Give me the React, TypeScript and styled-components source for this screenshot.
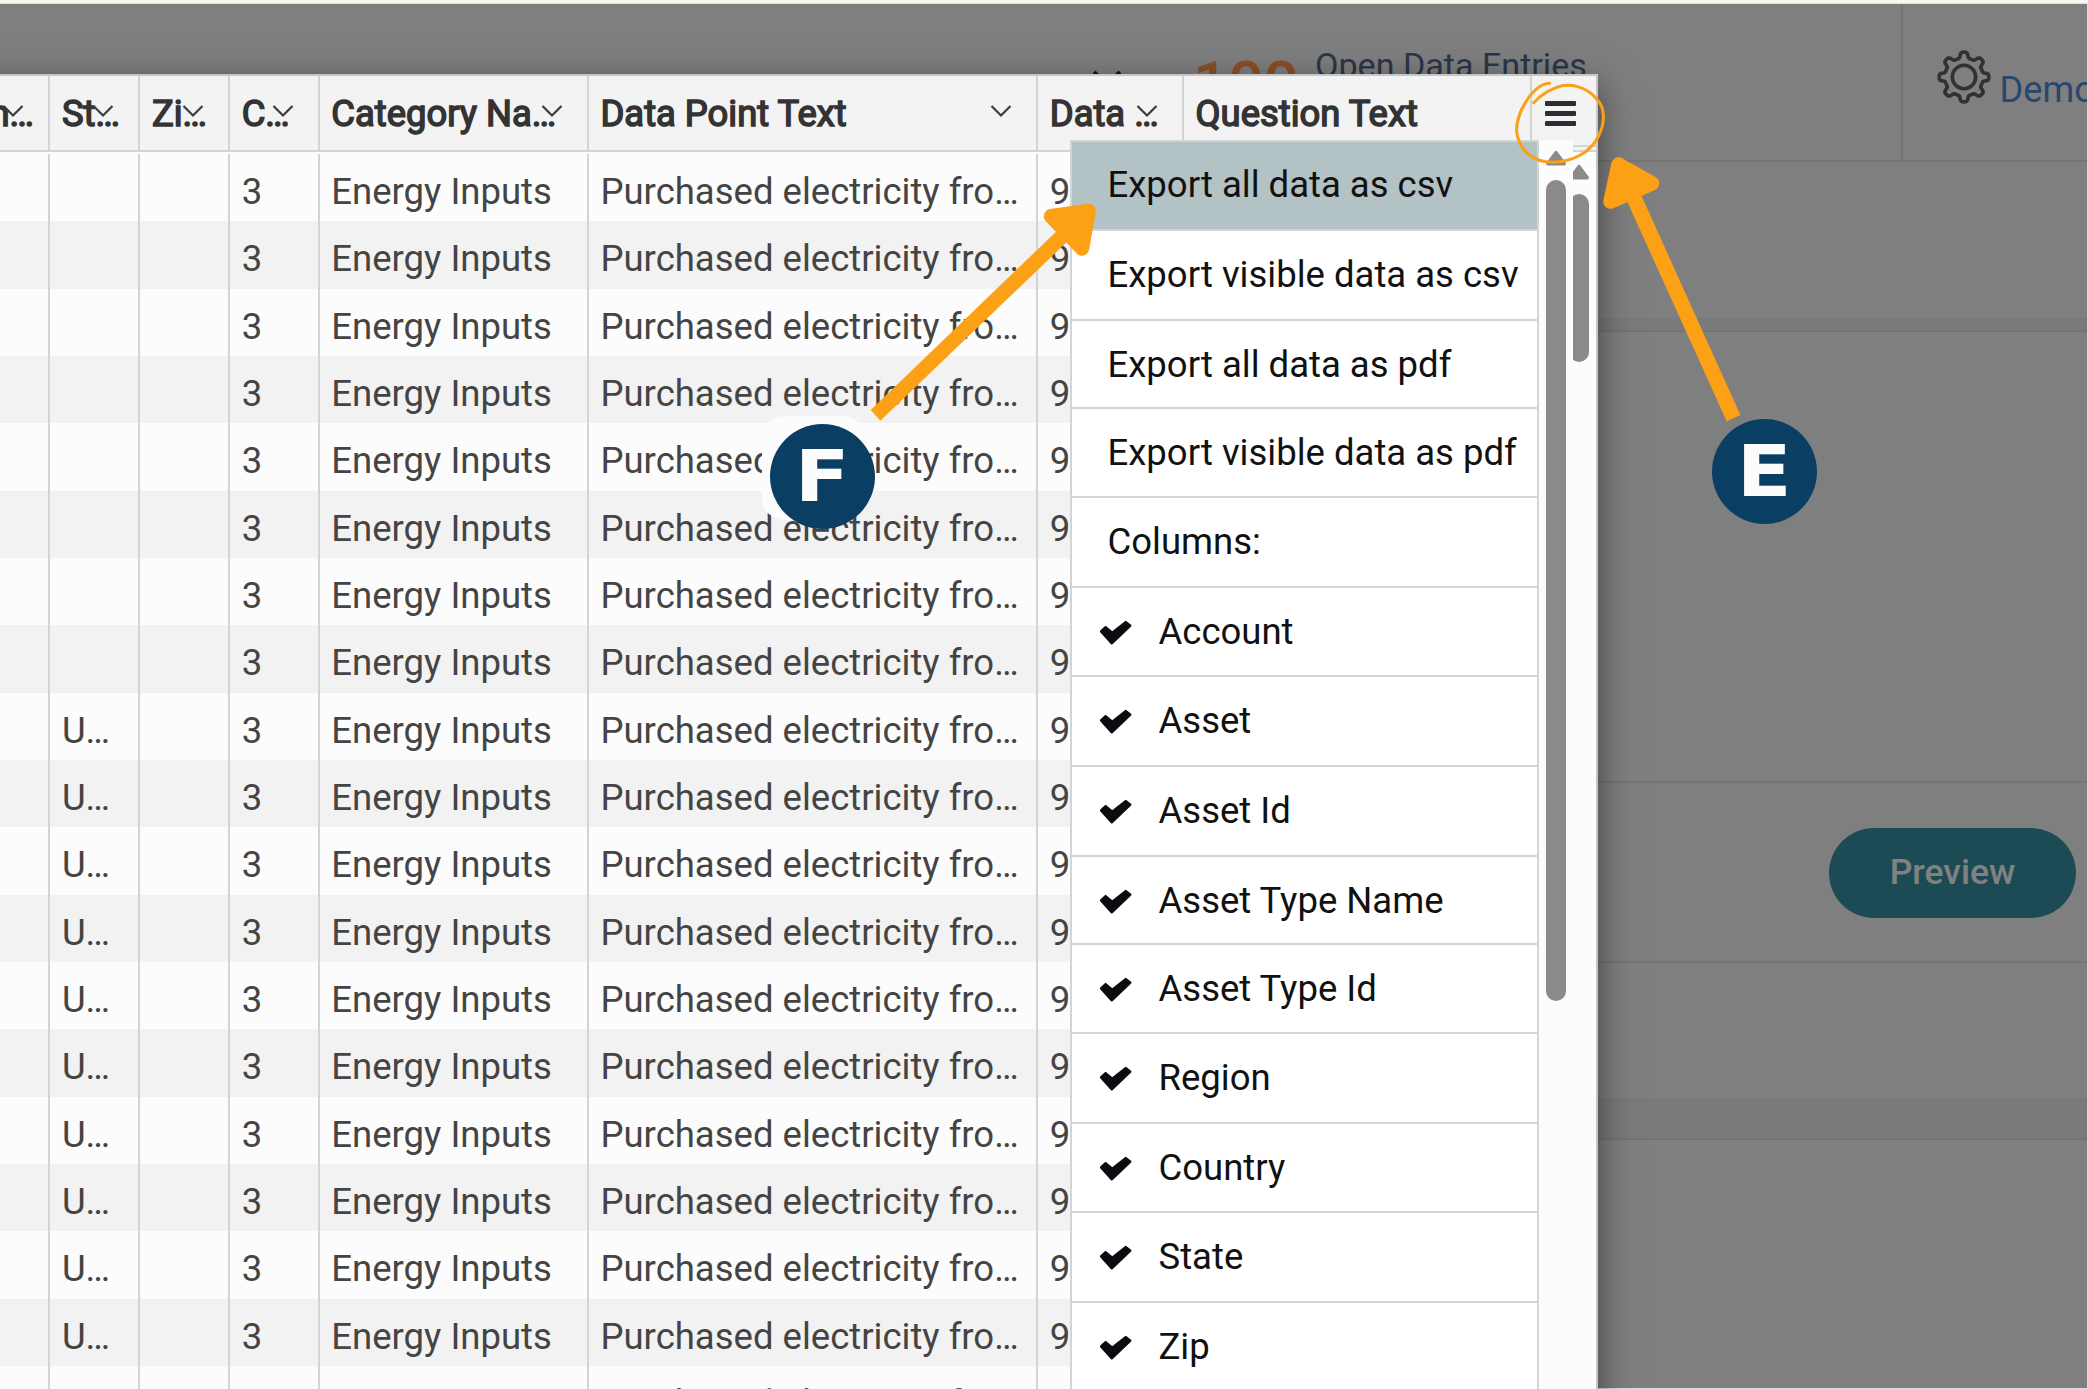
import React from "react";
import styled, { createGlobalStyle } from "styled-components";

const SANS = `Roboto, "Liberation Sans", sans-serif`;
const LINE = "#d4d4d4";
const ORANGE = "#fca016";
const NAVY = "#0b3e63";

const GlobalStyle = createGlobalStyle`
  * { box-sizing: border-box; }
  html, body { margin: 0; padding: 0; }
  body { background: #e6e7e0; font-family: ${SANS}; overflow: hidden; }
`;

const Stage = styled.div`
  position: relative;
  width: 2088px;
  height: 1389px;
  padding: 4px 1px 1px 0;
  overflow: hidden;
  background: linear-gradient(#f8faee 0 3px, #dcdcd8 3px);
`;

const Backdrop = styled.div`
  display: flex;
  flex-direction: column;
  width: 2087px;
  height: 1384px;
  background: #7f7f7f;
  overflow: hidden;
`;

const TopBar = styled.header`
  display: flex;
  flex: none;
  height: 158px;
  border-bottom: 2px solid #747474;
`;

const Summary = styled.div`
  display: flex;
  align-items: flex-start;
  flex: none;
  width: 1903px;
  padding-left: 1092px;
  border-right: 2px solid #747474;
`;

const SummaryChevron = styled.svg`
  width: 30px;
  height: 20px;
  margin-top: 62px;
`;

const Count = styled.span`
  width: 116px;
  margin: 44px 0 0 71px;
  font-size: 62px;
  font-weight: 500;
  line-height: 72px;
  color: #8a5129;
`;

const SummaryLink = styled.span`
  margin: 41px 0 0 6px;
  font-size: 34.1px;
  line-height: 40px;
  white-space: nowrap;
  color: #2c3648;
`;

const Account = styled.div`
  display: flex;
  align-items: flex-start;
  flex: 1;
  padding-left: 32.5px;
  overflow: hidden;
`;

const Gear = styled.svg`
  flex: none;
  width: 56px;
  height: 56px;
  margin-top: 44.5px;
`;

const AccountName = styled.span`
  margin: 65px 0 0 8px;
  font-size: 36.2px;
  line-height: 42px;
  white-space: nowrap;
  color: #27486c;
`;

const Section = styled.section<{ $height: number }>`
  display: flex;
  align-items: center;
  justify-content: flex-end;
  flex: none;
  height: ${(p) => p.$height}px;
  padding: 2px 11px 0 0;
  border-bottom: 2px solid #747474;
`;

const Band = styled.div<{ $height: number }>`
  flex: none;
  height: ${(p) => p.$height}px;
  background: #797a7c;
  border-bottom: 2px solid #747474;
`;

const Gap = styled.div<{ $height: number }>`
  flex: none;
  height: ${(p) => p.$height}px;
`;

const PreviewButton = styled.button`
  width: 247px;
  height: 90px;
  padding: 0 0 3px;
  border: 0;
  border-radius: 45px;
  background: #1d4b55;
  color: #808282;
  font: 500 35.5px ${SANS};
`;

const Modal = styled.div`
  position: absolute;
  top: 74px;
  left: -42px;
  width: 1640px;
  height: 1340px;
  border: 2px solid #c6c6c6;
  background: #fcfcfc;
  box-shadow: 0 11px 34px rgba(0, 0, 0, 0.5);
  overflow: hidden;
`;

const COLUMNS = "90.4px 90px 89.8px 89.6px 269.2px 449.3px 145.8px 348.2px 1fr";

const HeaderRow = styled.div`
  display: grid;
  grid-template-columns: ${COLUMNS};
  height: 76px;
  background: #f3f3f3;
  border-bottom: 2px solid ${LINE};
`;

const HeaderCell = styled.div`
  display: flex;
  align-items: flex-start;
  position: relative;
  padding: 15px 0 0 11.5px;
  border-right: 2px solid ${LINE};
  overflow: hidden;
  white-space: nowrap;
  font-size: 36.4px;
  line-height: 46px;
  color: #333;
  -webkit-text-stroke: 1.5px #333;
`;

const MenuCell = styled.div`
  padding: 25px 0 0 13px;
  background: linear-gradient(#f3f3f3 0 69px, ${LINE} 69px 71px, #f3f3f3 71px);
`;

const FirstLabel = styled.span`
  margin-left: 18px;
`;

const HeaderChevron = styled.svg`
  position: absolute;
  right: 24px;
  top: 28px;
  width: 22px;
  height: 14px;
`;

const Hamburger = styled.span`
  display: grid;
  gap: 5.5px;
  width: 31px;

  i {
    height: 4.7px;
    border-radius: 1px;
    background: #2c2c33;
  }
`;

const Body = styled.div`
  width: 1572px;
  padding-top: 2px;
`;

const Row = styled.div`
  display: grid;
  grid-template-columns: ${COLUMNS};
  height: 67.34px;

  &:nth-child(even) {
    background: #f2f2f2;
  }
`;

const Cell = styled.div<{ $bare?: boolean }>`
  padding: 4px 0 0 11.5px;
  border-right: ${(p) => (p.$bare ? "0" : `2px solid ${LINE}`)};
  overflow: hidden;
  white-space: nowrap;
  font-size: 36.5px;
  line-height: 67px;
  color: #444;
`;

const Bar = styled.div<{ $left: number; $top: number }>`
  position: absolute;
  left: ${(p) => p.$left}px;
  top: ${(p) => p.$top}px;
  display: flex;
  flex-direction: column;
  align-items: center;
  gap: 14px;
  width: 20px;
`;

const BarArrow = styled.svg`
  width: 20px;
  height: 16px;
`;

const Thumb = styled.div<{ $length: number }>`
  width: 20px;
  height: ${(p) => p.$length}px;
  border-radius: 10px;
  background: #8a8a8a;
`;

const Dropdown = styled.div`
  position: absolute;
  left: 1070px;
  top: 140px;
  display: flex;
  width: 503px;
  height: 1249px;
  background: #fcfcfc;
`;

const MenuList = styled.ul`
  width: 469px;
  height: 1300px;
  margin: 0;
  padding: 0;
  list-style: none;
  background: #fff;
  border: 2px solid ${LINE};
`;

const MenuItem = styled.li<{ $active?: boolean; $tight?: boolean }>`
  display: flex;
  align-items: flex-start;
  height: ${(p) => (p.$tight ? 88 : p.$active ? 89 : 89.6)}px;
  padding-left: 35.5px;
  border-bottom: 2px solid ${LINE};
  background: ${(p) => (p.$active ? "#b3c2c5" : "#fff")};
  font-size: 36.5px;
  line-height: ${(p) => (p.$active ? 86 : 88)}px;
  white-space: nowrap;
  color: #111;
`;

const Tick = styled.svg`
  width: 34px;
  height: 26px;
  margin: 32px 26px 0 -9px;
`;

const Annotations = styled.svg`
  position: absolute;
  inset: 0;
  width: 2088px;
  height: 1389px;
`;

const Halo = styled.div`
  position: absolute;
  left: 762px;
  top: 416px;
  width: 103px;
  height: 104px;
  border-radius: 22px;
  background: #fcfcfc;
`;

const Marker = styled.div<{ $x: number; $y: number }>`
  position: absolute;
  left: ${(p) => p.$x}px;
  top: ${(p) => p.$y}px;
  display: flex;
  align-items: center;
  justify-content: center;
  width: 105px;
  height: 105px;
  border-radius: 50%;
  background: ${NAVY};

  span {
    font: 700 71px/105px "DejaVu Sans", sans-serif;
    color: #fcfcfc;
    transform: scaleX(1.13);
  }
`;

const headers = ["n…", "St…", "Zi…", "C…", "Category Na…", "Data Point Text", "Data …", "Question Text"];

const rows = Array.from({ length: 19 }, (_, i) => [
  "",
  i >= 8 ? "U…" : "",
  "",
  "3",
  "Energy Inputs",
  "Purchased electricity fro…",
  "9",
]);

const actions = [
  "Export all data as csv",
  "Export visible data as csv",
  "Export all data as pdf",
  "Export visible data as pdf",
  "Columns:",
];

const columnNames = ["Account", "Asset", "Asset Id", "Asset Type Name", "Asset Type Id", "Region", "Country", "State", "Zip"];

const gearPath = (() => {
  const pts: string[] = [];
  const steps = 160;
  for (let i = 0; i < steps; i++) {
    const a = (i / steps) * Math.PI * 2;
    const wave = Math.tanh(2.6 * (Math.cos(8 * a) - 0.15));
    const r = 22 + 2.9 * wave;
    pts.push(`${(28 + r * Math.cos(a)).toFixed(2)} ${(28 + r * Math.sin(a)).toFixed(2)}`);
  }
  return `M${pts.join("L")}Z`;
})();

const ScrollBar = ({ left, top, length }: { left: number; top: number; length: number }) => (
  <Bar $left={left} $top={top}>
    <BarArrow viewBox="0 0 20 16">
      <path d="M8.2 2.2 Q10 -0.6 11.8 2.2 L19.6 12.6 Q20.4 15.5 18.5 15.5 H1.5 Q-0.4 15.5 0.4 12.6Z" fill="#8a8a8a" />
    </BarArrow>
    <Thumb $length={length} />
  </Bar>
);

export default function App() {
  return (
    <Stage>
      <GlobalStyle />
      <Backdrop>
        <TopBar>
          <Summary>
            <SummaryChevron viewBox="0 0 30 20">
              <path d="M2 6 L15 19 L28 6" fill="none" stroke="#15151a" strokeWidth="4" />
            </SummaryChevron>
            <Count>100</Count>
            <SummaryLink>Open Data Entries</SummaryLink>
          </Summary>
          <Account>
            <Gear viewBox="0 0 56 56">
              <path d={gearPath} fill="none" stroke="#303035" strokeWidth="3.6" strokeLinejoin="round" />
              <circle cx="28" cy="28" r="11.7" fill="none" stroke="#303035" strokeWidth="3.6" />
            </Gear>
            <AccountName>Demo</AccountName>
          </Account>
        </TopBar>
        <Gap $height={156} />
        <Band $height={14} />
        <Section $height={451} />
        <Section $height={180}>
          <PreviewButton>Preview</PreviewButton>
        </Section>
        <Gap $height={135} />
        <Band $height={42} />
      </Backdrop>

      <Modal>
        <HeaderRow>
          {headers.map((label, i) => (
            <HeaderCell key={label}>
              {i === 0 ? <FirstLabel>{label}</FirstLabel> : label}
              {i < 7 && (
                <HeaderChevron viewBox="0 0 22 14">
                  <path d="M1.5 2 L11 11.5 L20.5 2" fill="none" stroke="#3c3c3c" strokeWidth="2.2" />
                </HeaderChevron>
              )}
            </HeaderCell>
          ))}
          <MenuCell>
            <Hamburger>
              <i />
              <i />
              <i />
            </Hamburger>
          </MenuCell>
        </HeaderRow>
        <Body>
          {rows.map((cells, r) => (
            <Row key={r}>
              {cells.map((text, c) => (
                <Cell key={c} $bare={c === 6}>
                  {text}
                </Cell>
              ))}
            </Row>
          ))}
        </Body>
        <ScrollBar left={1608.5} top={87.5} length={168} />
      </Modal>

      <Dropdown>
        <MenuList>
          {actions.map((label, i) => (
            <MenuItem key={label} $active={i === 0} $tight={i === 2}>
              {label}
            </MenuItem>
          ))}
          {columnNames.map((label, i) => (
            <MenuItem key={label} $tight={i === 3}>
              <Tick viewBox="0 0 34 26">
                <path
                  d="M2 11.4 L6.6 7 L13.2 12.6 L26.6 2 L31.4 5.6 L12.8 23.4Z"
                  fill="#0c0c10"
                  stroke="#0c0c10"
                  strokeWidth="2.2"
                  strokeLinejoin="round"
                />
              </Tick>
              {label}
            </MenuItem>
          ))}
        </MenuList>
        <ScrollBar left={476} top={10} length={821} />
      </Dropdown>

      <Halo />
      <Annotations viewBox="0 0 2088 1389">
        <g fill={ORANGE} stroke={ORANGE}>
          <path d="M870.7 410 L880.3 420.7 L1072 237 L1062 226Z" stroke="none" />
          <path d="M1051 216.3 L1088.5 211 L1082 248.5Z" strokeWidth="14.5" strokeLinejoin="round" />
          <path d="M1726.7 421.3 L1740.4 415 L1638 188 L1624 194.5Z" stroke="none" />
          <path d="M1618.5 164.5 L1652 183.3 L1610.5 201.5Z" strokeWidth="14.5" strokeLinejoin="round" />
        </g>
        <path
          d="M1549.8 83.3 C1540 83 1530 94 1524 105 C1517 117 1515 130 1518 138 C1522 152 1534 162 1552 162.3 C1572 162 1590 153 1598 137 C1605 124 1606 109 1596.8 99 C1588 88 1574 84 1563 85.5 C1551 88 1541 95 1533.7 102.7"
          fill="none"
          stroke={ORANGE}
          strokeWidth="3"
          strokeLinecap="round"
        />
      </Annotations>
      <Marker $x={770} $y={423.5}>
        <span>F</span>
      </Marker>
      <Marker $x={1711.5} $y={418.5}>
        <span>E</span>
      </Marker>
    </Stage>
  );
}
